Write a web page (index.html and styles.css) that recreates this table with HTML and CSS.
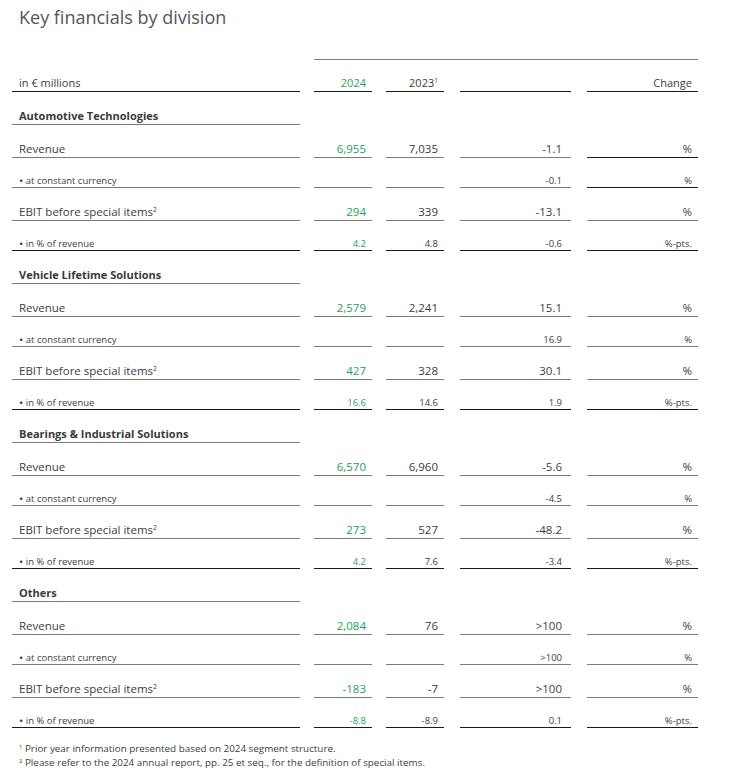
FILE: index.html
```html
<!DOCTYPE html>
<html lang="en">
<head>
<meta charset="utf-8">
<title>Key financials by division</title>
<link rel="stylesheet" href="styles.css">
</head>
<body>
<div class="page">
  <h1 class="title">Key financials by division</h1>
  <div class="tbl">
    <div class="row toprow"><div class="blank"></div><div class="span"></div></div>
    <div class="row head dark">
      <div class="c lab">in € millions</div>
      <div class="c n g">2024</div>
      <div class="c n"><span>2023<sup>1</sup></span></div>
      <div class="c n chg"></div>
      <div class="c n unit">Change</div>
    </div>

    <div class="row sec"><div class="c lab b">Automotive Technologies</div></div>
    <div class="row big"><div class="c lab">Revenue</div><div class="c n g">6,955</div><div class="c n">7,035</div><div class="c n chg">-1.1</div><div class="c n unit dk">%</div></div>
    <div class="row sm"><div class="c lab"><span><span class="bul">•</span> at constant currency</span></div><div class="c n g"></div><div class="c n"></div><div class="c n chg">-0.1</div><div class="c n unit dk">%</div></div>
    <div class="row big"><div class="c lab"><span>EBIT before special items<sup>2</sup></span></div><div class="c n g">294</div><div class="c n">339</div><div class="c n chg">-13.1</div><div class="c n unit">%</div></div>
    <div class="row sm dark"><div class="c lab"><span><span class="bul">•</span> in % of revenue</span></div><div class="c n g">4.2</div><div class="c n">4.8</div><div class="c n chg">-0.6</div><div class="c n unit">%-pts.</div></div>

    <div class="row sec"><div class="c lab b">Vehicle Lifetime Solutions</div></div>
    <div class="row big"><div class="c lab">Revenue</div><div class="c n g">2,579</div><div class="c n">2,241</div><div class="c n chg">15.1</div><div class="c n unit">%</div></div>
    <div class="row sm"><div class="c lab"><span><span class="bul">•</span> at constant currency</span></div><div class="c n g"></div><div class="c n"></div><div class="c n chg">16.9</div><div class="c n unit">%</div></div>
    <div class="row big"><div class="c lab"><span>EBIT before special items<sup>2</sup></span></div><div class="c n g">427</div><div class="c n">328</div><div class="c n chg">30.1</div><div class="c n unit">%</div></div>
    <div class="row sm dark"><div class="c lab"><span><span class="bul">•</span> in % of revenue</span></div><div class="c n g">16.6</div><div class="c n">14.6</div><div class="c n chg">1.9</div><div class="c n unit">%-pts.</div></div>

    <div class="row sec"><div class="c lab b">Bearings &amp; Industrial Solutions</div></div>
    <div class="row big"><div class="c lab">Revenue</div><div class="c n g">6,570</div><div class="c n">6,960</div><div class="c n chg">-5.6</div><div class="c n unit">%</div></div>
    <div class="row sm"><div class="c lab"><span><span class="bul">•</span> at constant currency</span></div><div class="c n g"></div><div class="c n"></div><div class="c n chg">-4.5</div><div class="c n unit">%</div></div>
    <div class="row big"><div class="c lab"><span>EBIT before special items<sup>2</sup></span></div><div class="c n g">273</div><div class="c n">527</div><div class="c n chg">-48.2</div><div class="c n unit">%</div></div>
    <div class="row sm dark"><div class="c lab"><span><span class="bul">•</span> in % of revenue</span></div><div class="c n g">4.2</div><div class="c n">7.6</div><div class="c n chg">-3.4</div><div class="c n unit">%-pts.</div></div>

    <div class="row sec"><div class="c lab b">Others</div></div>
    <div class="row big"><div class="c lab">Revenue</div><div class="c n g">2,084</div><div class="c n">76</div><div class="c n chg">&gt;100</div><div class="c n unit">%</div></div>
    <div class="row sm"><div class="c lab"><span><span class="bul">•</span> at constant currency</span></div><div class="c n g"></div><div class="c n"></div><div class="c n chg">&gt;100</div><div class="c n unit">%</div></div>
    <div class="row big"><div class="c lab"><span>EBIT before special items<sup>2</sup></span></div><div class="c n g">-183</div><div class="c n">-7</div><div class="c n chg">&gt;100</div><div class="c n unit">%</div></div>
    <div class="row sm last"><div class="c lab"><span><span class="bul">•</span> in % of revenue</span></div><div class="c n g">-8.8</div><div class="c n">-8.9</div><div class="c n chg">0.1</div><div class="c n unit">%-pts.</div></div>
  </div>
  <div class="notes">
    <p><sup>1</sup> Prior year information presented based on 2024 segment structure.</p>
    <p><sup>2</sup> Please refer to the 2024 annual report, pp. 25 et seq., for the definition of special items.</p>
  </div>
</div>
</body>
</html>
```
FILE: styles.css
```css
html, body {
  margin: 0;
  padding: 0;
  background: #ffffff;
}
body {
  font-family: "Open Sans", Lato, sans-serif;
  color: #3d3d3d;
}
.page {
  width: 742px;
}
.title {
  margin: 0;
  height: 36px;
  box-sizing: border-box;
  padding: 4px 0 0 19px;
  font-size: 18px;
  line-height: 26px;
  font-weight: 400;
  color: #555555;
}
.tbl {
  padding-left: 12px;
}
.row {
  display: flex;
  gap: 14px;
  box-sizing: border-box;
}
.toprow {
  height: 24px;
}
.blank {
  width: 288px;
  flex: none;
}
.span {
  width: 384px;
  flex: none;
  border-bottom: 1px solid #808080;
}
.head { height: 32px; font-size: 11px; }
.sec { height: 33px; font-size: 11px; }
.big { height: 33px; font-size: 11.5px; }
.sm { height: 30px; font-size: 9.5px; }
.c {
  box-sizing: border-box;
  flex: none;
  display: flex;
  align-items: flex-end;
  padding-bottom: 1px;
  border-bottom: 1px solid #7b7b7b;
  white-space: nowrap;
}
.sm .c { padding-bottom: 0; }
.dark .c, .c.dk { border-bottom-color: #1a1a1a; }
.lab {
  width: 288px;
  padding-left: 7px;
}
.bul {
  font-size: 1.2em;
  line-height: 0;
  vertical-align: -1px;
}
.b { font-weight: 700; color: #3a3a3a; }
.n {
  width: 58px;
  justify-content: flex-end;
  padding-right: 6px;
}
.chg {
  width: 111px;
  margin-left: 2px;
  padding-right: 9px;
}
.unit {
  width: 111px;
  margin-left: 2px;
  padding-right: 6px;
}
.g { color: #23a15a; }
sup {
  font-size: 0.6em;
  line-height: 0;
  vertical-align: 0.55em;
}
.last { gap: 0; }
.last .c { border-bottom: 1px solid #1a1a1a; }
.last .n { margin-left: 14px; }
.last .chg, .last .unit { margin-left: 16px; }
.notes {
  margin-top: 13px;
  padding-left: 19px;
  font-size: 9.85px;
  line-height: 14px;
  color: #3d3d3d;
}
.notes p { margin: 0; }
```
